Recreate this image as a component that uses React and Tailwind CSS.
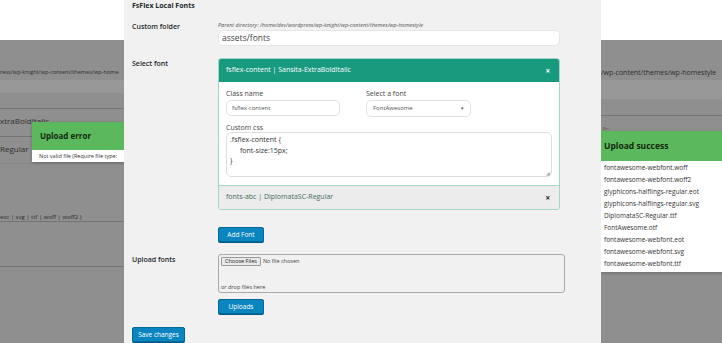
import React from 'react';

const font = { fontFamily: '"Open Sans", "Liberation Sans", sans-serif' };

function Button({ children, className = '' }) {
  return (
    <div
      className={`flex h-[15px] items-center justify-center rounded-[2px] border border-[#006a9a] bg-[#0a85c0] text-[6.5px] text-white shadow-[0_1px_0_#005a85] ${className}`}
    >
      {children}
    </div>
  );
}

function LeftPanel() {
  return (
    <div className="relative w-[124px] shrink-0 overflow-hidden">
      <div className="h-[40px] bg-white"></div>
      <div className="bg-[#8f8f8f] text-[#2e2e2e]">
        <div className="h-[40px] whitespace-nowrap pt-[27px] text-[5.6px] leading-[10px]">
          ress/wp-knight/wp-content/themes/wp-home
        </div>
        <div className="h-[13px] bg-[#989898]"></div>
        <div className="h-[15px]"></div>
        <div className="h-px bg-[#747474]"></div>
        <div className="h-[27px] whitespace-nowrap pt-[6px] text-[8px] leading-[12px]">xtraBoldItalic</div>
        <div className="h-px bg-[#747474]"></div>
        <div className="h-[26px] whitespace-nowrap pt-[6px] text-[8px] leading-[12px]">Regular</div>
        <div className="h-px bg-[#878787]"></div>
        <div className="h-[57px] whitespace-nowrap pt-[49px] text-[6px] leading-[8px]">
          eot | svg | ttf | woff | woff2 )
        </div>
        <div className="h-px bg-[#747474]"></div>
        <div className="h-[44px]"></div>
        <div className="h-px bg-[#747474]"></div>
        <div className="h-[76px]"></div>
      </div>

      {/* error popup */}
      <div className="absolute left-[32px] top-[122px] w-[110px] shadow-[0_1px_3px_rgba(0,0,0,0.25)]">
        <div className="flex h-[28px] items-center bg-[#5cb85c] pl-[8px] text-[8px] font-bold text-[#102a10]">
          Upload error
        </div>
        <div className="h-[12px] whitespace-nowrap bg-white pl-[7px] text-[5.5px] leading-[12px] text-[#333]">
          Not valid file (Require file type:
        </div>
      </div>
    </div>
  );
}

function RightPanel() {
  const files = [
    'fontawesome-webfont.woff',
    'fontawesome-webfont.woff2',
    'glyphicons-halflings-regular.eot',
    'glyphicons-halflings-regular.svg',
    'DiplomataSC-Regular.ttf',
    'FontAwesome.otf',
    'fontawesome-webfont.eot',
    'fontawesome-webfont.svg',
    'fontawesome-webfont.ttf',
  ];

  return (
    <div className="relative flex-1 overflow-hidden">
      <div className="h-[40px] bg-white"></div>
      <div className="bg-[#8f8f8f] text-[#2e2e2e]">
        <div className="h-[40px] whitespace-nowrap pt-[28px] text-[7px] leading-[10px]">
          /wp-content/themes/wp-homestyle
        </div>
        <div className="h-[19px] bg-[#989898]"></div>
        <div className="h-[16px]"></div>
        <div className="h-px bg-[#747474]"></div>
        <div className="h-[227px] pl-[2px] pt-[9px] text-[5px] leading-[6px]">c--</div>
      </div>

      {/* success popup */}
      <div className="absolute left-0 top-[131px] w-[130px] shadow-[0_1px_3px_rgba(0,0,0,0.25)]">
        <div className="flex h-[30px] items-center bg-[#5cb85c] pl-[3px] text-[8.5px] font-bold text-[#102a10]">
          Upload success
        </div>
        <div className="h-[111px] bg-white pl-[3px] pt-px text-[6.5px] leading-[12px] text-[#333]">
          {files.map((f) => (
            <div key={f} className="whitespace-nowrap">{f}</div>
          ))}
        </div>
      </div>
    </div>
  );
}

function FontCard() {
  return (
    <div className="w-[342px] overflow-hidden rounded-[3px] border border-[#a3d6c8] bg-white">
      <div className="flex h-[23px] items-center justify-between bg-[#179a7d] pl-[7px] pr-[9px] text-[7px] text-white">
        <span>fsflex-content | Sansita-ExtraBoldItalic</span>
        <span className="text-[8px] font-bold">×</span>
      </div>

      <div className="h-[104px] border-b border-[#a3d6c8] px-[7px] pt-[7px] text-[#444]">
        <div className="flex text-[7px] leading-[10px]">
          <div className="w-[140px]">Class name</div>
          <div>Select a font</div>
        </div>
        <div className="mt-px flex">
          <div className="w-[140px]">
            <div className="flex h-[16px] w-[114px] items-center rounded-[5px] border border-[#e2e2e2] bg-white pl-[5px] text-[6px] text-[#555]">
              fsflex-content
            </div>
          </div>
          <div className="flex h-[17px] w-[105px] items-center justify-between rounded-[5px] border border-[#e2e2e2] bg-white pl-[6px] pr-[6px] text-[6px] text-[#555]">
            <span>FontAwesome</span>
            <span className="text-[5px]">▾</span>
          </div>
        </div>
        <div className="mt-[6px] text-[7px] leading-[9px]">Custom css</div>
        <div className="relative h-[45px] w-[326px] rounded-[5px] border border-[#dedede] bg-white pl-[3px] pt-[2px] text-[7px] leading-[10.5px] text-[#333]">
          <div>.fsflex-content {'{'}</div>
          <div className="pl-[10px]">font-size:15px;</div>
          <div>{'}'}</div>
          <span className="absolute bottom-0 right-[1px] text-[5px] leading-[5px] text-[#aaa]">◢</span>
        </div>
      </div>

      <div className="flex h-[23px] items-center justify-between bg-[#ececec] pl-[7px] pr-[9px] text-[7px] text-[#3f6b62]">
        <span>fonts-abc | DiplomataSC-Regular</span>
        <span className="text-[8px] font-bold text-[#222]">×</span>
      </div>
    </div>
  );
}

function CenterPanel() {
  return (
    <div className="h-[343px] w-[477px] shrink-0 overflow-hidden bg-[#f1f1f1] pl-[8px] text-[#23282d]">
      <div className="pt-px text-[7px] font-bold leading-[10px]">FsFlex Local Fonts</div>

      {/* custom folder */}
      <div className="mt-[9px] flex">
        <div className="w-[86px] text-[7px] font-semibold leading-[14px]">Custom folder</div>
        <div>
          <div className="whitespace-nowrap text-[5.5px] italic leading-[10px] text-[#555]">
            Parent directory: /home/dev/wordpress/wp-knight/wp-content/themes/wp-homestyle
          </div>
          <div className="flex h-[16px] w-[342px] items-center rounded-[5px] border border-[#e6e6e6] bg-white pl-[3px] text-[8.5px] text-[#444]">
            assets/fonts
          </div>
        </div>
      </div>

      {/* select font */}
      <div className="mt-[12px] flex">
        <div className="w-[86px] text-[7px] font-semibold leading-[12px]">Select font</div>
        <div>
          <FontCard />
          <Button className="mt-[17px] w-[46px]">Add Font</Button>
        </div>
      </div>

      {/* upload fonts */}
      <div className="mt-[12px] flex">
        <div className="w-[86px] text-[7px] font-semibold leading-[12px]">Upload fonts</div>
        <div>
          <div className="flex h-[39px] w-[347px] flex-col justify-between rounded-[3px] border border-[#a9a9a9] bg-[#f1f1f1] px-[2px] pb-[1px] pt-[2px] text-[5.5px] text-[#444]">
            <div className="flex items-center gap-[2px]">
              <span className="rounded-[1px] border border-[#999] bg-[#e9e9e9] px-[3px] leading-[7px] text-[#222]">
                Choose Files
              </span>
              <span>No file chosen</span>
            </div>
            <div className="leading-[8px]">or drop files here</div>
          </div>
          <Button className="mt-[6px] w-[46px]">Uploads</Button>
        </div>
      </div>

      <Button className="mt-[13px] w-[53px]">Save changes</Button>
    </div>
  );
}

export default function App() {
  return (
    <div className="flex h-[343px] w-[722px] overflow-hidden bg-white" style={font}>
      <LeftPanel />
      <CenterPanel />
      <RightPanel />
    </div>
  );
}
